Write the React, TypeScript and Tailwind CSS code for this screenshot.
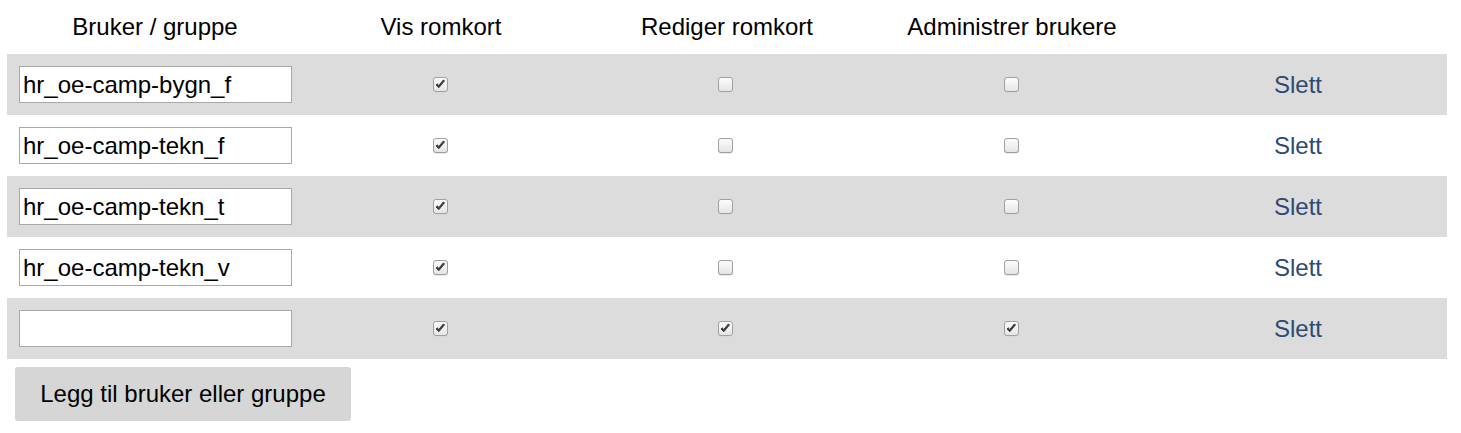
import React from "react";

const rows = [
  { name: "hr_oe-camp-bygn_f", vis: true, red: false, adm: false },
  { name: "hr_oe-camp-tekn_f", vis: true, red: false, adm: false },
  { name: "hr_oe-camp-tekn_t", vis: true, red: false, adm: false },
  { name: "hr_oe-camp-tekn_v", vis: true, red: false, adm: false },
  { name: "", vis: true, red: true, adm: true },
];

function Check({ checked }: { checked: boolean }) {
  return (
    <svg width="17" height="17" viewBox="0 0 17 17" className="block">
      <defs>
        <linearGradient id="cbg" x1="0" y1="0" x2="0" y2="1">
          <stop offset="0" stopColor="#fdfdfd" />
          <stop offset="1" stopColor="#e4e4e4" />
        </linearGradient>
      </defs>
      <rect x="1" y="1.5" width="15" height="15" rx="3" fill="#d2d2d2" />
      <rect x="1.5" y="1.5" width="14" height="14" rx="2.5" fill="url(#cbg)" stroke="#a0a0a0" strokeWidth="1" />
      {checked && (
        <path d="M4 9 L6.8 11.8 L12.6 4.8 L11.3 4 L6.8 9.4 L5.2 7.8 Z" fill="#3a3a3a" stroke="#3a3a3a" strokeWidth="0.9" strokeLinejoin="round" />
      )}
    </svg>
  );
}

export default function App() {
  return (
    <div className="pl-[7px] font-['Liberation_Sans',Arial,sans-serif] text-[24px] text-black bg-white min-h-[433px]">
      <div className="w-[1440px]">
        <div className="grid grid-cols-[296px_276px_296px_274px_298px] h-[54px] items-center text-center">
          <div>Bruker / gruppe</div>
          <div>Vis romkort</div>
          <div>Rediger romkort</div>
          <div>Administrer brukere</div>
          <div></div>
        </div>
        {rows.map((r, i) => (
          <div
            key={i}
            className={`grid grid-cols-[296px_276px_296px_274px_298px] h-[61px] items-center ${i % 2 === 0 ? "bg-[#dcdcdc]" : "bg-white"}`}
          >
            <div className="pl-[12px]">
              <input
                type="text"
                defaultValue={r.name}
                className="w-[273px] h-[37px] border border-[#a9a9a9] bg-white px-[3px] text-[24px] text-black outline-none"
              />
            </div>
            <div className="flex justify-center pr-[2px] pb-[1px]"><Check checked={r.vis} /></div>
            <div className="flex justify-center pr-[4px] pb-[1px]"><Check checked={r.red} /></div>
            <div className="flex justify-center pr-[2px] pb-[1px]"><Check checked={r.adm} /></div>
            <div className="text-center text-[#2c4a74]">Slett</div>
          </div>
        ))}
      </div>
      <button className="mt-[8px] ml-[8px] w-[336px] h-[54px] rounded-[3px] bg-[#d6d6d6] text-[24px] text-black">
        Legg til bruker eller gruppe
      </button>
    </div>
  );
}
